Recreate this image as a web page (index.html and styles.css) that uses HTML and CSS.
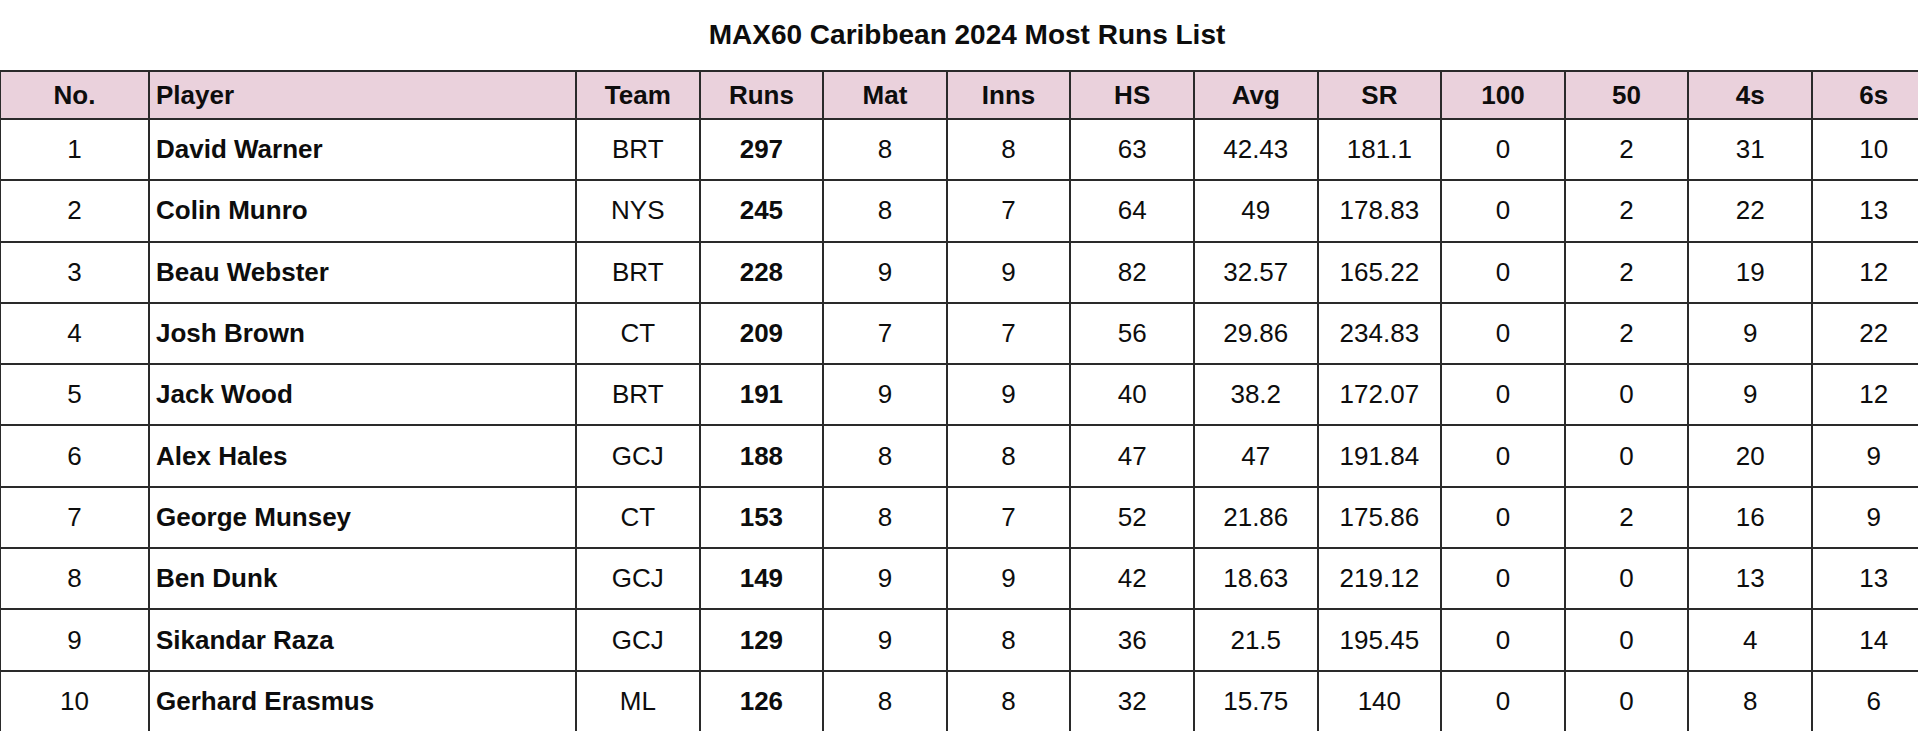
FILE: index.html
```html
<!DOCTYPE html>
<html lang="en">
<head>
<meta charset="utf-8">
<title>MAX60 Caribbean 2024 Most Runs List</title>
<link rel="stylesheet" href="styles.css">
</head>
<body>
<div class="sheet">
  <h1 class="title">MAX60 Caribbean 2024 Most Runs List</h1>
  <table class="stats">
    <colgroup>
      <col class="c-no"><col class="c-player"><col class="c-num"><col class="c-num"><col class="c-num"><col class="c-num"><col class="c-num"><col class="c-num"><col class="c-num"><col class="c-num"><col class="c-num"><col class="c-num"><col class="c-num">
    </colgroup>
    <thead>
      <tr><th>No.</th><th class="left">Player</th><th>Team</th><th>Runs</th><th>Mat</th><th>Inns</th><th>HS</th><th>Avg</th><th>SR</th><th>100</th><th>50</th><th>4s</th><th>6s</th></tr>
    </thead>
    <tbody>
      <tr><td>1</td><td class="name">David Warner</td><td>BRT</td><td class="b">297</td><td>8</td><td>8</td><td>63</td><td>42.43</td><td>181.1</td><td>0</td><td>2</td><td>31</td><td>10</td></tr>
      <tr><td>2</td><td class="name">Colin Munro</td><td>NYS</td><td class="b">245</td><td>8</td><td>7</td><td>64</td><td>49</td><td>178.83</td><td>0</td><td>2</td><td>22</td><td>13</td></tr>
      <tr><td>3</td><td class="name">Beau Webster</td><td>BRT</td><td class="b">228</td><td>9</td><td>9</td><td>82</td><td>32.57</td><td>165.22</td><td>0</td><td>2</td><td>19</td><td>12</td></tr>
      <tr><td>4</td><td class="name">Josh Brown</td><td>CT</td><td class="b">209</td><td>7</td><td>7</td><td>56</td><td>29.86</td><td>234.83</td><td>0</td><td>2</td><td>9</td><td>22</td></tr>
      <tr><td>5</td><td class="name">Jack Wood</td><td>BRT</td><td class="b">191</td><td>9</td><td>9</td><td>40</td><td>38.2</td><td>172.07</td><td>0</td><td>0</td><td>9</td><td>12</td></tr>
      <tr><td>6</td><td class="name">Alex Hales</td><td>GCJ</td><td class="b">188</td><td>8</td><td>8</td><td>47</td><td>47</td><td>191.84</td><td>0</td><td>0</td><td>20</td><td>9</td></tr>
      <tr><td>7</td><td class="name">George Munsey</td><td>CT</td><td class="b">153</td><td>8</td><td>7</td><td>52</td><td>21.86</td><td>175.86</td><td>0</td><td>2</td><td>16</td><td>9</td></tr>
      <tr><td>8</td><td class="name">Ben Dunk</td><td>GCJ</td><td class="b">149</td><td>9</td><td>9</td><td>42</td><td>18.63</td><td>219.12</td><td>0</td><td>0</td><td>13</td><td>13</td></tr>
      <tr><td>9</td><td class="name">Sikandar Raza</td><td>GCJ</td><td class="b">129</td><td>9</td><td>8</td><td>36</td><td>21.5</td><td>195.45</td><td>0</td><td>0</td><td>4</td><td>14</td></tr>
      <tr><td>10</td><td class="name">Gerhard Erasmus</td><td>ML</td><td class="b">126</td><td>8</td><td>8</td><td>32</td><td>15.75</td><td>140</td><td>0</td><td>0</td><td>8</td><td>6</td></tr>
    </tbody>
  </table>
</div>
</body>
</html>
```

FILE: styles.css
```css
html, body {
  margin: 0;
  padding: 0;
  background: #ffffff;
  overflow: hidden;
}

body {
  font-family: "Liberation Sans", Arial, sans-serif;
  color: #0d0d0d;
}

.sheet {
  width: 1936px;
  margin-left: -1px;
}

.title {
  margin: 0;
  height: 70px;
  display: flex;
  align-items: center;
  justify-content: center;
  font-size: 28px;
  font-weight: bold;
  color: #0d0d0d;
}

.stats {
  width: 1936px;
  border-collapse: collapse;
  table-layout: fixed;
  font-size: 26px;
}

.c-no { width: 149px; }
.c-player { width: 427px; }
.c-num { width: 123.6px; }

.stats th,
.stats td {
  border: 2px solid #2a2a2a;
  text-align: center;
  padding: 0;
  white-space: nowrap;
  overflow: hidden;
}

.stats th {
  background: #ead1dc;
  height: 46px;
  font-weight: bold;
}

.stats td {
  height: 59.3px;
  font-weight: normal;
}

.stats th.left,
.stats td.name {
  text-align: left;
  padding-left: 6px;
}

.stats td.name,
.stats td.b {
  font-weight: bold;
}
```
